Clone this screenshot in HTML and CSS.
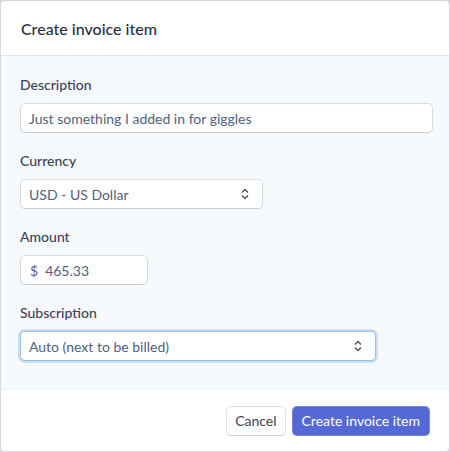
FILE: index.html
```html
<!DOCTYPE html>
<html>
<head>
<meta charset="utf-8">
<link rel="stylesheet" href="styles.css">
</head>
<body>
<div class="dialog">
  <div class="header">Create invoice item</div>
  <div class="content">
    <div class="field">
      <div class="label">Description</div>
      <div class="input wide">Just something I added in for giggles</div>
    </div>
    <div class="field">
      <div class="label">Currency</div>
      <div class="input select currency"><span>USD - US Dollar</span>
        <svg class="arrows" width="8" height="12" viewBox="0 0 8 12"><path d="M1 4.5 L4 1.5 L7 4.5 M1 7.5 L4 10.5 L7 7.5" fill="none" stroke="#4f566b" stroke-width="1.5"/></svg>
      </div>
    </div>
    <div class="field">
      <div class="label">Amount</div>
      <div class="input amount"><span class="cur">$</span><span>465.33</span></div>
    </div>
    <div class="field">
      <div class="label">Subscription</div>
      <div class="input select sub focus"><span>Auto (next to be billed)</span>
        <svg class="arrows" width="8" height="12" viewBox="0 0 8 12"><path d="M1 4.5 L4 1.5 L7 4.5 M1 7.5 L4 10.5 L7 7.5" fill="none" stroke="#4f566b" stroke-width="1.5"/></svg>
      </div>
    </div>
  </div>
  <div class="footer">
    <button class="btn cancel">Cancel</button>
    <button class="btn primary">Create invoice item</button>
  </div>
</div>
</body>
</html>
```
FILE: styles.css
```css
html, body {
  margin: 0;
  padding: 0;
}
body {
  background: #d5d9df;
  width: 450px;
  height: 452px;
  padding: 1px;
  box-sizing: border-box;
  font-family: Lato, "Noto Sans", sans-serif;
}
.dialog {
  width: 448px;
  height: 450px;
  background: #fff;
  border-radius: 4px;
  overflow: hidden;
  display: flex;
  flex-direction: column;
}
.header {
  height: 55px;
  box-sizing: border-box;
  border-bottom: 1px solid #e3e8ee;
  padding: 0 20px;
  display: flex;
  align-items: center;
  font-size: 16px;
  font-weight: 500;
  color: #2a2f45;
}
.content {
  background: #f7fafc;
  padding: 19px 19px 0;
  height: 334px;
  box-sizing: border-box;
  border-bottom: 1px solid #eef1f5;
}
.field {
  margin-bottom: 19px;
}
.label {
  font-size: 14px;
  line-height: 20px;
  font-weight: 500;
  color: #3c4257;
  margin-bottom: 9px;
}
.input {
  height: 28px;
  box-sizing: border-box;
  background: #fff;
  border-radius: 4px;
  box-shadow: 0 0 0 1px rgba(60, 66, 87, 0.16), 0 1px 1px rgba(0, 0, 0, 0.08);
  font-size: 14px;
  color: #525f7f;
  display: flex;
  align-items: center;
  padding: 0 8px;
  margin-left: 1px;
}
.wide { width: 411px; }
.currency { width: 241px; }
.amount { width: 126px; padding-left: 9px; }
.amount .cur { margin-right: 7px; }
.sub { width: 354px; }
.select { justify-content: space-between; padding-right: 13px; }
.focus {
  box-shadow: 0 0 0 1px rgba(58, 151, 212, 0.36), 0 0 0 3px rgba(122, 170, 220, 0.35), 0 1px 1px rgba(0, 0, 0, 0.08);
}
.footer {
  flex: 1;
  display: flex;
  justify-content: flex-end;
  align-items: center;
  padding: 0 20px 0;
  gap: 8px;
}
.btn {
  font-family: inherit;
  font-size: 14px;
  height: 28px;
  border-radius: 4px;
  border: 0;
  padding: 0 9px;
  cursor: pointer;
}
.cancel {
  background: #fff;
  color: #3c4257;
  padding: 0 8px;
  box-shadow: 0 0 0 1px rgba(60, 66, 87, 0.16), 0 1px 1px rgba(0, 0, 0, 0.08);
}
.primary {
  background: #5469d4;
  color: #fff;
  box-shadow: 0 0 0 1px rgba(84, 105, 212, 0.8), 0 1px 1px rgba(0, 0, 0, 0.08);
}
```
